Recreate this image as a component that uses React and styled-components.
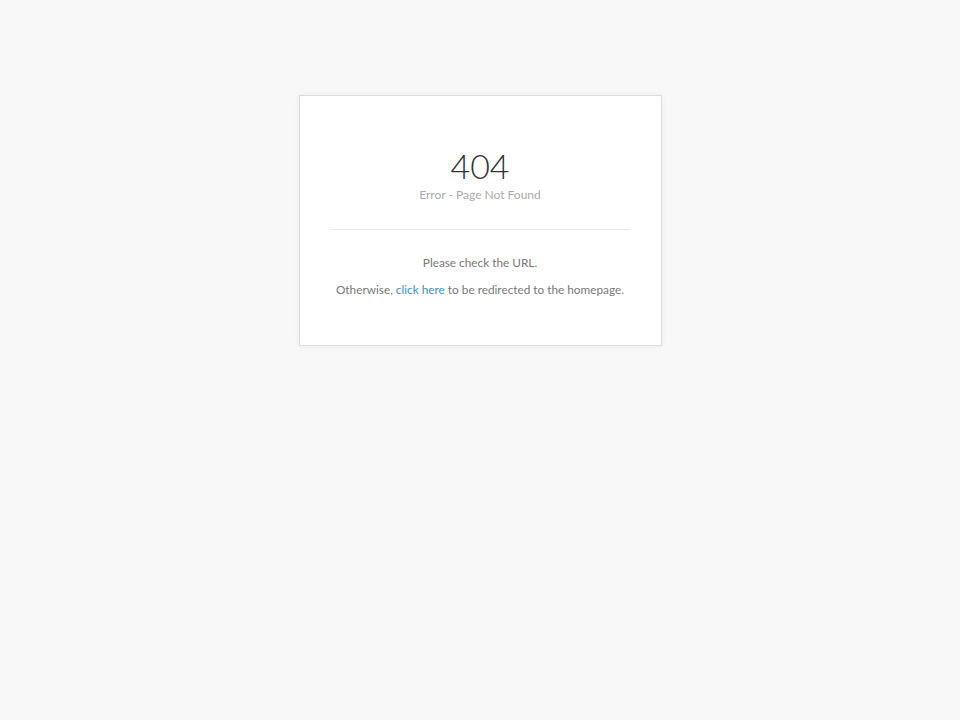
import React from 'react'
import styled, { createGlobalStyle } from 'styled-components'

const GlobalStyle = createGlobalStyle`
  html, body {
    margin: 0;
    padding: 0;
    background: #f8f8f8;
    font-family: Lato, "Open Sans", sans-serif;
  }
`

const Page = styled.div`
  display: flex;
  justify-content: center;
  align-items: flex-start;
  padding-top: 95px;
  min-height: 720px;
  box-sizing: border-box;
`

const Card = styled.div`
  width: 363px;
  height: 251px;
  box-sizing: border-box;
  background: #fff;
  border: 1px solid #dcdcdc;
  box-shadow: 0 0 6px rgba(0, 0, 0, 0.06);
  padding: 51px 31px 0;
  text-align: center;
`

const Code = styled.h1`
  margin: 0;
  font-size: 34px;
  font-weight: 300;
  line-height: 38px;
  color: #333;
`

const Subtitle = styled.div`
  margin-top: 2px;
  font-size: 12px;
  line-height: 16px;
  font-weight: 400;
  color: #aaa;
`

const Divider = styled.hr`
  margin: 26px 0 25px;
  border: 0;
  border-top: 1px solid #e8e8e8;
`

const Text = styled.p`
  margin: 0 0 12px;
  font-size: 11.8px;
  line-height: 15px;
  font-weight: 400;
  color: #777;
  white-space: nowrap;
  &:last-child {
    margin-bottom: 0;
  }
`

const Link = styled.a`
  color: #3d8fc4;
  text-decoration: none;
`

const App = () => (
  <>
    <GlobalStyle />
    <Page>
      <Card>
        <Code>404</Code>
        <Subtitle>Error - Page Not Found</Subtitle>
        <Divider />
        <Text>Please check the URL.</Text>
        <Text>
          Otherwise, <Link href='#'>click here</Link> to be redirected to the homepage.
        </Text>
      </Card>
    </Page>
  </>
)

export default App
